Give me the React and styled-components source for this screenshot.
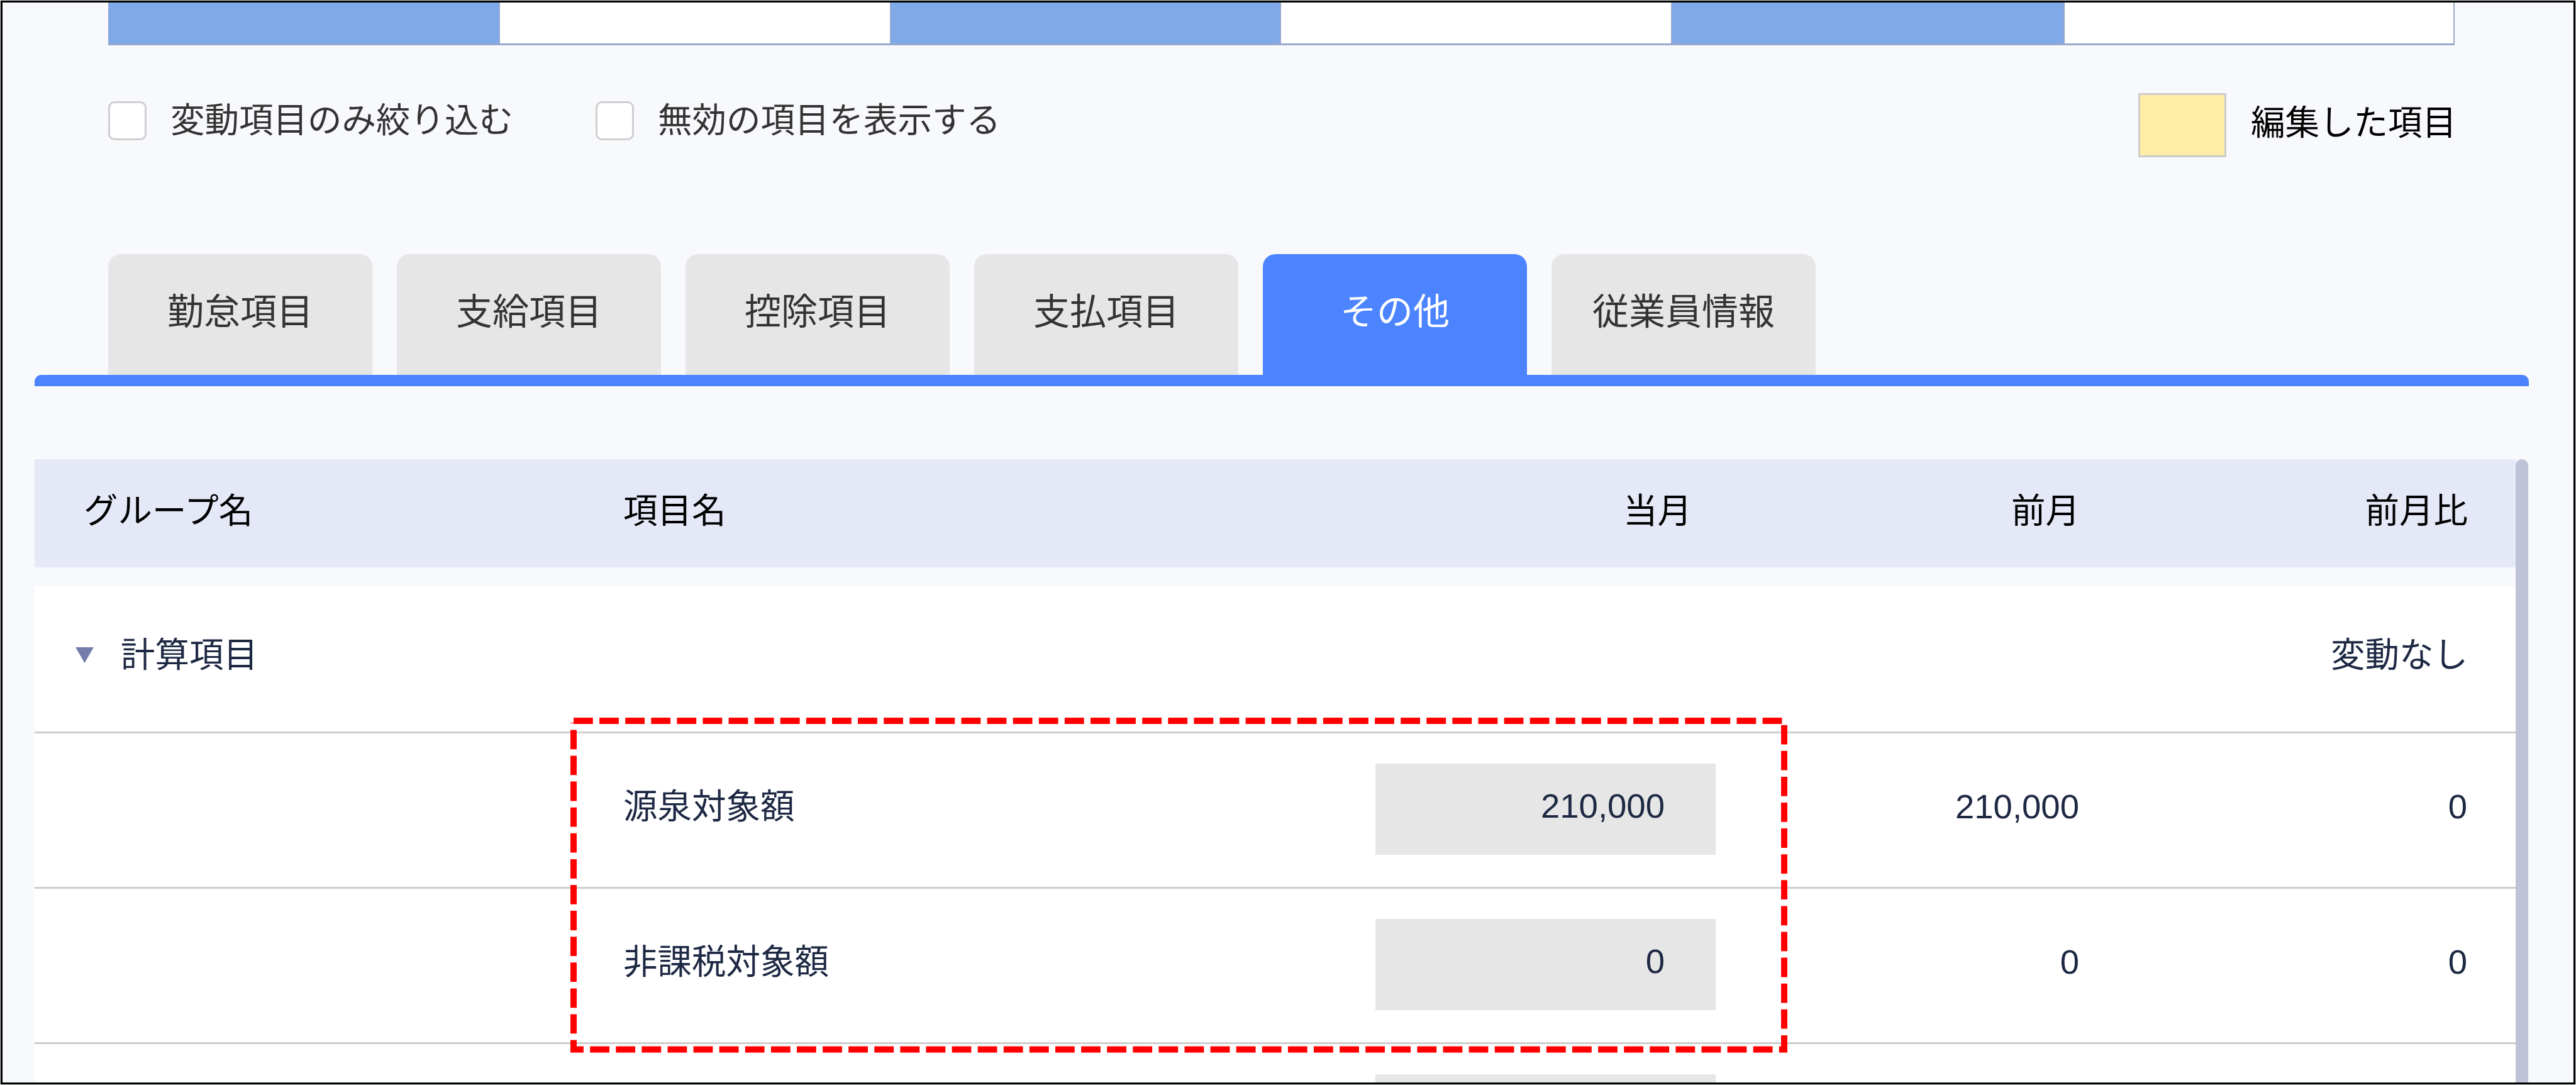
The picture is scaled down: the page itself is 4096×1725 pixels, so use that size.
import styled, { createGlobalStyle } from "styled-components";

const color = {
  page: "#f8f9fc",
  blue: "#4c84ff",
  cellBlue: "#80a9e8",
  cellLine: "#96a8cb",
  gray: "#e6e6e6",
  line: "#cecece",
  head: "#e5e8f7",
  thumb: "#bfc3d8",
  navy: "#1d2843",
  text: "#333333",
  red: "#ff0000",
};

const summaryCells = [true, false, true, false, true, false];

const filters = ["変動項目のみ絞り込む", "無効の項目を表示する"];

const tabs = [
  "勤怠項目",
  "支給項目",
  "控除項目",
  "支払項目",
  "その他",
  "従業員情報",
];

const activeTab = "その他";

const items = [
  { id: 0, name: "源泉対象額", current: "210,000", prev: "210,000", diff: "0" },
  { id: 1, name: "非課税対象額", current: "0", prev: "0", diff: "0" },
  { id: 2, name: "", current: "", prev: "", diff: "" },
];

const GlobalStyle = createGlobalStyle`
  * {
    box-sizing: border-box;
  }

  body {
    margin: 0;
    background-color: #d3d9d4;
    font-family: "Liberation Sans", "Noto Sans CJK JP", sans-serif;
    font-size: 54.5px;
    line-height: 64px;
  }
`;

const Screen = styled.div`
  position: relative;
  width: 4094px;
  height: 1723px;
  margin: 1px;
  border: 3px solid #000;
  background-color: ${color.page};
  overflow: hidden;
  white-space: nowrap;
`;

const Summary = styled.div`
  display: grid;
  grid-template-columns: 623px 622px 620px 622px 624px 620px;
  width: 3731px;
  height: 68px;
  margin-left: 168px;
`;

const SummaryCell = styled.div`
  background-color: ${(props) => (props.$label ? color.cellBlue : "#fff")};
  border-right: 2px solid ${color.cellLine};
  border-bottom: 3px solid ${color.cellLine};

  &:first-child {
    border-left: 1px solid ${color.cellLine};
  }
`;

const Toolbar = styled.div`
  display: flex;
  justify-content: space-between;
  width: 3731px;
  height: 332px;
  margin-left: 168px;
  padding-top: 76px;
`;

const Filters = styled.div`
  display: flex;
  align-items: center;
  gap: 131px;
  height: 88px;
`;

const Filter = styled.label`
  display: flex;
  align-items: center;
  gap: 38px;
  color: ${color.text};
`;

const CheckBox = styled.span`
  width: 61px;
  height: 62px;
  border: 3px solid #cfcfcf;
  border-radius: 10px;
  background-color: #fff;
`;

const Legend = styled.div`
  display: flex;
  align-items: center;
  gap: 39px;
  height: 102px;
  margin-right: -3px;
  color: #000;
`;

const Swatch = styled.span`
  width: 140px;
  height: 102px;
  border: 3px solid #cccccc;
  background-color: #ffeda6;
`;

const LegendText = styled.span`
  padding-bottom: 6px;
`;

const Tabs = styled.div`
  display: flex;
  gap: 39px;
  height: 192px;
  padding-left: 168px;
`;

const Tab = styled.div`
  width: 420px;
  padding-top: 60px;
  border-radius: 20px 20px 0 0;
  background-color: ${(props) => (props.$active ? color.blue : color.gray)};
  color: ${(props) => (props.$active ? "#fff" : color.text)};
  font-size: 58px;
  text-align: center;
`;

const TabBar = styled.div`
  width: 3966px;
  height: 18px;
  margin-left: 51px;
  border-radius: 11px 11px 0 0;
  background-color: ${color.blue};
`;

const TableWrap = styled.div`
  display: flex;
  height: 991px;
  margin: 116px 0 0 51px;
`;

const Table = styled.div`
  width: 3945px;
`;

const ScrollThumb = styled.div`
  width: 20px;
  border-radius: 10px 10px 0 0;
  background-color: ${color.thumb};
`;

const Row = styled.div`
  display: grid;
  grid-template-columns: 936px 1196px 541px 579px 617px;
  align-items: center;
  height: 247px;
  padding-bottom: 4px;
  border-bottom: 3px solid ${color.line};
  background-color: #fff;
  color: ${color.navy};
`;

const HeadRow = styled(Row)`
  height: 172px;
  margin-bottom: 30px;
  padding-bottom: 7px;
  border-bottom: none;
  background-color: ${color.head};
  color: #000;
`;

const GroupRow = styled(Row)`
  height: 234px;
  padding-bottom: 12px;
`;

const Cell = styled.div`
  text-align: ${(props) => props.$align || "left"};
  padding-left: ${(props) => props.$padLeft || 0}px;
  padding-right: ${(props) => props.$padRight || 0}px;
`;

const ItemCell = styled(Cell)`
  padding-bottom: 6px;
`;

const GroupName = styled.div`
  display: flex;
  align-items: center;
  gap: 43px;
  padding-left: 65px;
`;

const Amount = styled.div`
  height: 145px;
  padding: 36px 81px 0 0;
  background-color: ${color.gray};
  text-align: right;
`;

const Highlight = styled.svg`
  position: absolute;
  top: 1137px;
  left: 903px;
  width: 1936px;
  height: 534px;
`;

const Triangle = () => (
  <svg width="29" height="25" viewBox="0 0 29 25">
    <path d="M0 0H29L14.5 25Z" fill="#737cab" />
  </svg>
);

const App = () => {
  return (
    <>
      <GlobalStyle />
      <Screen>
        <Summary>
          {summaryCells.map((label, i) => (
            <SummaryCell key={i} $label={label} />
          ))}
        </Summary>
        <Toolbar>
          <Filters>
            {filters.map((filter) => (
              <Filter key={filter}>
                <CheckBox />
                {filter}
              </Filter>
            ))}
          </Filters>
          <Legend>
            <Swatch />
            <LegendText>編集した項目</LegendText>
          </Legend>
        </Toolbar>
        <Tabs>
          {tabs.map((tab) => (
            <Tab key={tab} $active={tab === activeTab}>
              {tab}
            </Tab>
          ))}
        </Tabs>
        <TabBar />
        <TableWrap>
          <Table>
            <HeadRow>
              <Cell $padLeft={78}>グループ名</Cell>
              <Cell>項目名</Cell>
              <Cell $align="right" $padRight={38}>
                当月
              </Cell>
              <Cell $align="right">前月</Cell>
              <Cell $align="right">前月比</Cell>
            </HeadRow>
            <GroupRow>
              <GroupName>
                <Triangle />
                計算項目
              </GroupName>
              <Cell />
              <Cell />
              <Cell />
              <Cell $align="right">変動なし</Cell>
            </GroupRow>
            {items.map((item) => (
              <Row key={item.id}>
                <Cell />
                <ItemCell>{item.name}</ItemCell>
                <Amount>{item.current}</Amount>
                <ItemCell $align="right" $padRight={1}>
                  {item.prev}
                </ItemCell>
                <ItemCell $align="right" $padRight={1}>
                  {item.diff}
                </ItemCell>
              </Row>
            ))}
          </Table>
          <ScrollThumb />
        </TableWrap>
        <Highlight viewBox="0 0 1936 534">
          <path
            d="M5 5H1930V527.5H5V8"
            fill="none"
            stroke={color.red}
            strokeWidth="10"
            strokeDasharray="30.8 10.3"
          />
        </Highlight>
      </Screen>
    </>
  );
};

export default App;
